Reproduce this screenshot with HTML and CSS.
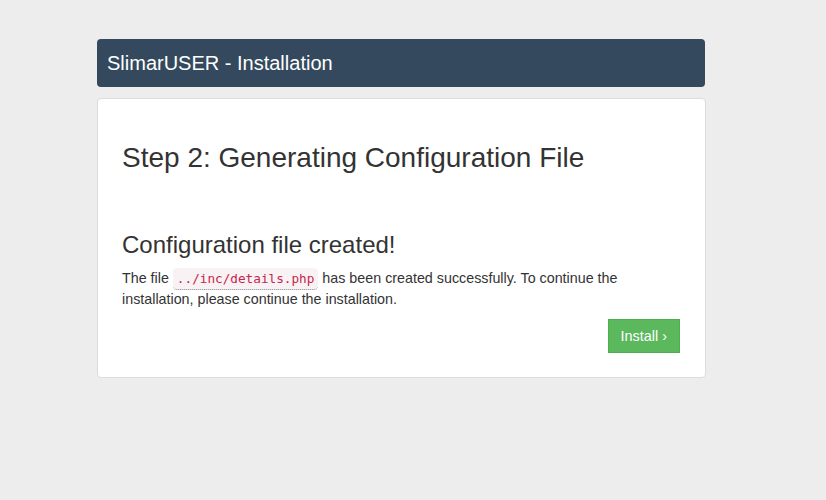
FILE: index.html
```html
<!DOCTYPE html>
<html>
<head>
<meta charset="utf-8">
<link rel="stylesheet" href="styles.css">
</head>
<body>
<div class="wrap">
  <div class="topbar">SlimarUSER - Installation</div>
  <div class="card">
    <h2 class="step">Step 2: Generating Configuration File</h2>
    <h3 class="sub">Configuration file created!</h3>
    <p class="text">The file <code class="file">../inc/details.php</code> has been created successfully. To continue the installation, please continue the installation.</p>
    <div class="actions"><button class="btn">Install ›</button></div>
  </div>
</div>
</body>
</html>
```
FILE: styles.css
```css
html, body { margin: 0; padding: 0; }
body {
  background: #ededed;
  font-family: "Liberation Sans", Arial, sans-serif;
  font-size: 14px;
  line-height: 1.42857;
  color: #333;
}
.wrap {
  width: 609px;
  margin-left: 97px;
  padding-top: 39px;
}
.topbar {
  background: #34495e;
  color: #fff;
  font-size: 20px;
  height: 48px;
  line-height: 48px;
  padding: 0 10px;
  margin-right: 1px;
  border-radius: 4px;
  box-sizing: border-box;
}
.card {
  margin-top: 11px;
  background: #fff;
  border: 1px solid #dcdcdc;
  border-radius: 4px;
  padding: 42px 25px 24px 24px;
}
.step {
  margin: 0;
  font-size: 28px;
  font-weight: normal;
  line-height: 33px;
}
.sub {
  margin: 58px 0 10px;
  font-size: 24px;
  font-weight: normal;
  line-height: 26px;
}
.text {
  margin: 0 0 9px;
  font-size: 14.3px;
  line-height: 21px;
}
.file {
  font-family: "DejaVu Sans Mono", "Liberation Mono", monospace;
  font-size: 12.7px;
  color: #c7254e;
  background: #f9f2f4;
  padding: 3px 4px;
  border-radius: 4px;
  border-bottom: 1px dotted #888;
}
.actions {
  display: flex;
  justify-content: flex-end;
}
.btn {
  font-family: inherit;
  font-size: 14.4px;
  line-height: 20px;
  color: #fff;
  background: #5cb85c;
  border: 1px solid #4cae4c;
  padding: 6px 12px;
  border-radius: 0;
}
```
